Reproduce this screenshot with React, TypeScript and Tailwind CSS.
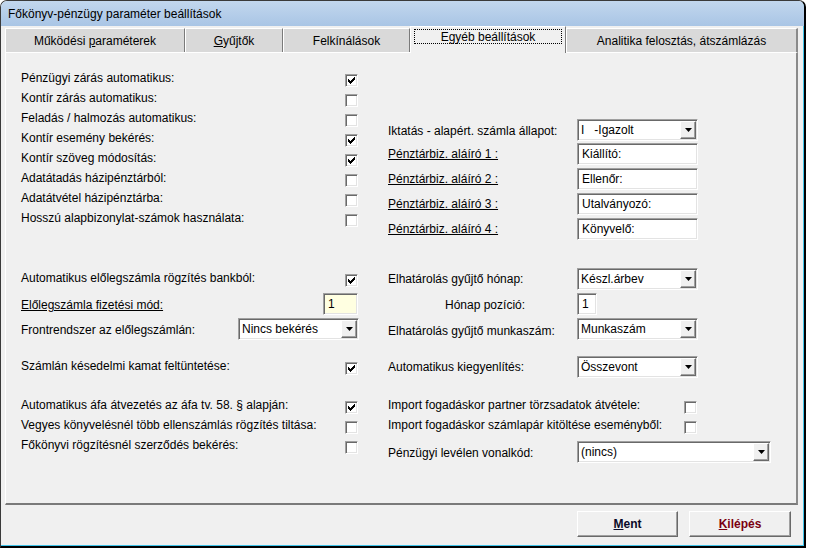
import React from 'react'

const sunken =
  'border border-t-[#a0a0a0] border-l-[#a0a0a0] border-b-white border-r-white shadow-[inset_1px_1px_0_#696969,inset_-1px_-1px_0_#e3e3e3]'

const raised =
  'border border-t-white border-l-white border-b-[#696969] border-r-[#696969] shadow-[inset_-1px_-1px_0_#a0a0a0]'

function Check({ on = false }: { on?: boolean }) {
  const ys = [2, 3, 4, 3, 2, 1, 0]
  return (
    <span className={`flex h-[13px] w-[13px] shrink-0 items-center justify-center bg-white ${sunken}`}>
      {on && (
        <svg width="7" height="7" viewBox="0 0 7 7" shapeRendering="crispEdges">
          {ys.map((y, i) => (
            <rect key={i} x={i} y={y} width="1" height="3" fill="#000" />
          ))}
        </svg>
      )}
    </span>
  )
}

function Field({ value, w, yellow = false }: { value: string; w: string; yellow?: boolean }) {
  return (
    <div
      className={`flex h-[22px] ${w} items-center px-[4px] ${yellow ? 'bg-[#ffffe1]' : 'bg-white'} ${sunken}`}
    >
      {value}
    </div>
  )
}

function Combo({ value, w }: { value: string; w: string }) {
  return (
    <div className={`flex h-[22px] ${w} items-stretch bg-white ${sunken}`}>
      <span className="flex flex-1 items-center whitespace-pre pl-[3px]">{value}</span>
      <span className={`m-[1px] flex w-[16px] items-center justify-center bg-[#f0f0f0] ${raised}`}>
        <svg width="7" height="4" viewBox="0 0 7 4">
          <path d="M0 0h7L3.5 4z" fill="#000" />
        </svg>
      </span>
    </div>
  )
}

function CheckRow({ label, on, lw, cls = '' }: { label: string; on?: boolean; lw: string; cls?: string }) {
  return (
    <div className={`flex h-[20px] items-center ${cls}`}>
      <span className={`${lw} shrink-0 pb-[4px]`}>{label}</span>
      <Check on={on} />
    </div>
  )
}

const leftTop: [string, boolean][] = [
  ['Pénzügyi zárás automatikus:', true],
  ['Kontír zárás automatikus:', false],
  ['Feladás / halmozás automatikus:', false],
  ['Kontír esemény bekérés:', true],
  ['Kontír szöveg módosítás:', true],
  ['Adatátadás házipénztárból:', false],
  ['Adatátvétel házipénztárba:', false],
  ['Hosszú alapbizonylat-számok használata:', false],
]

const signers = [
  ['Pénztárbiz. aláíró 1 :', 'Kiállító:'],
  ['Pénztárbiz. aláíró 2 :', 'Ellenőr:'],
  ['Pénztárbiz. aláíró 3 :', 'Utalványozó:'],
  ['Pénztárbiz. aláíró 4 :', 'Könyvelő:'],
]

export default function App() {
  return (
    <div className="h-[559px] w-[814px] bg-white font-['Liberation_Sans',Arial,sans-serif] text-[12px] leading-none text-black">
      <div className="flex h-[548px] w-[806px] flex-col overflow-hidden rounded-t-[7px] border border-r-2 border-b-2 border-[#3a3a3a] border-r-black border-b-black bg-[#f0f0f0] shadow-[inset_-1px_-1px_0_#40c4ea]">
        {/* title bar */}
        <div className="flex h-[25px] shrink-0 items-center bg-gradient-to-b from-[#c2d7ee] to-[#a9c5e5] pl-[7px]">
          Főkönyv-pénzügy paraméter beállítások
        </div>

        <div className="flex flex-col pl-[4px]">
          {/* tabs */}
          <div className="flex h-[26px] items-end">
            <div className="flex h-[24px] w-[180px] items-center justify-center border-t border-l border-white border-r border-r-[#7a7a7a] bg-[#d9d9d9] pt-[1px]">
              Működési&nbsp;<u>p</u>araméterek
            </div>
            <div className="flex h-[24px] w-[98px] items-center justify-center border-t border-l border-white border-r border-r-[#7a7a7a] bg-[#d9d9d9] pt-[1px]">
              <u>G</u>yűjtők
            </div>
            <div className="flex h-[24px] w-[127px] items-center justify-center border-t border-l border-white border-r border-r-[#7a7a7a] bg-[#d9d9d9] pt-[1px]">
              Felkínálások
            </div>
            <div className="relative z-10 -mb-[1px] flex h-[27px] w-[156px] items-start justify-center border-t border-l border-white border-r border-r-[#7a7a7a] bg-[#f0f0f0] pt-[2px]">
              <div className="flex h-[15px] w-[148px] items-center justify-center border border-dotted border-black">
                Egyéb beállítások
              </div>
            </div>
            <div className="flex h-[24px] w-[232px] items-center justify-center border-t border-l border-white border-r-2 border-r-[#8a8a8a] bg-[#d9d9d9] pt-[1px]">
              Analitika felosztás, átszámlázás
            </div>
          </div>

          {/* panel */}
          <div className="flex h-[453px] w-[793px] border-t border-l border-white border-r-2 border-b-2 border-r-[#8a8a8a] border-b-[#7a7a7a]">
            {/* left column */}
            <div className="flex w-[368px] flex-col pl-[15px] pt-[17px]">
              {leftTop.map(([l, on]) => (
                <CheckRow key={l} label={l} on={on} lw="w-[324px]" />
              ))}
              <CheckRow label="Automatikus előlegszámla rögzítés bankból:" on lw="w-[324px]" cls="mt-[40px]" />
              <div className="mt-[3px] flex h-[22px] items-center">
                <span className="w-[302px] shrink-0 pt-[2px] underline">Előlegszámla fizetési mód:</span>
                <Field value="1" w="w-[35px]" yellow />
              </div>
              <div className="mt-[3px] flex h-[22px] items-center">
                <span className="w-[217px] shrink-0 pt-[2px]">Frontrendszer az előlegszámlán:</span>
                <Combo value="Nincs bekérés" w="w-[121px]" />
              </div>
              <CheckRow label="Számlán késedelmi kamat feltüntetése:" on lw="w-[324px]" cls="mt-[18px]" />
              <CheckRow label="Automatikus áfa átvezetés az áfa tv. 58. § alapján:" on lw="w-[324px]" cls="mt-[19px]" />
              <CheckRow label="Vegyes könyvelésnél több ellenszámlás rögzítés tiltása:" lw="w-[324px]" />
              <CheckRow label="Főkönyvi rögzítésnél szerződés bekérés:" lw="w-[324px]" />
            </div>

            {/* right column */}
            <div className="flex flex-col pl-[14px] pt-[66px]">
              <div className="flex h-[22px] items-center">
                <span className="w-[189px] shrink-0 pt-[2px]">Iktatás - alapért. számla állapot:</span>
                <Combo value="I   -Igazolt" w="w-[121px]" />
              </div>
              {signers.map(([l, v], i) => (
                <div key={l} className={`${i === 0 ? 'mt-[2px]' : 'mt-[4px]'} flex h-[21px] items-center`}>
                  <span className="w-[189px] shrink-0 pt-[1px] underline">{l}</span>
                  <Field value={v} w="w-[121px]" />
                </div>
              ))}
              <div className="mt-[29px] flex h-[21px] items-center">
                <span className="w-[189px] shrink-0">Elhatárolás gyűjtő hónap:</span>
                <Combo value="Készl.árbev" w="w-[121px]" />
              </div>
              <div className="mt-[4px] flex h-[22px] items-center">
                <span className="w-[189px] shrink-0 pl-[57px] pt-[2px]">Hónap pozíció:</span>
                <Field value="1" w="w-[20px]" />
              </div>
              <div className="mt-[3px] flex h-[22px] items-center">
                <span className="w-[189px] shrink-0 pt-[3px]">Elhatárolás gyűjtő munkaszám:</span>
                <Combo value="Munkaszám" w="w-[121px]" />
              </div>
              <div className="mt-[16px] flex h-[22px] items-center">
                <span className="w-[189px] shrink-0">Automatikus kiegyenlítés:</span>
                <Combo value="Összevont" w="w-[121px]" />
              </div>
              <CheckRow label="Import fogadáskor partner törzsadatok átvétele:" lw="w-[296px]" cls="mt-[19px]" />
              <CheckRow label="Import fogadáskor számlapár kitöltése eseményből:" lw="w-[296px]" />
              <div className="mt-[4px] flex h-[22px] items-center">
                <span className="w-[189px] shrink-0 pt-[2px]">Pénzügyi levélen vonalkód:</span>
                <Combo value="(nincs)" w="w-[194px]" />
              </div>
            </div>
          </div>

          {/* footer buttons */}
          <div className="flex gap-[11px] pl-[572px] pt-[6px]">
            <button className={`flex h-[26px] w-[101px] items-center justify-center bg-[#f0f0f0] font-bold text-[#0a0a28] ${raised}`}>
              <u>M</u>ent
            </button>
            <button className={`flex h-[26px] w-[102px] items-center justify-center bg-[#f0f0f0] font-bold text-[#7a0010] ${raised}`}>
              <u>K</u>ilépés
            </button>
          </div>
        </div>
      </div>
    </div>
  )
}
